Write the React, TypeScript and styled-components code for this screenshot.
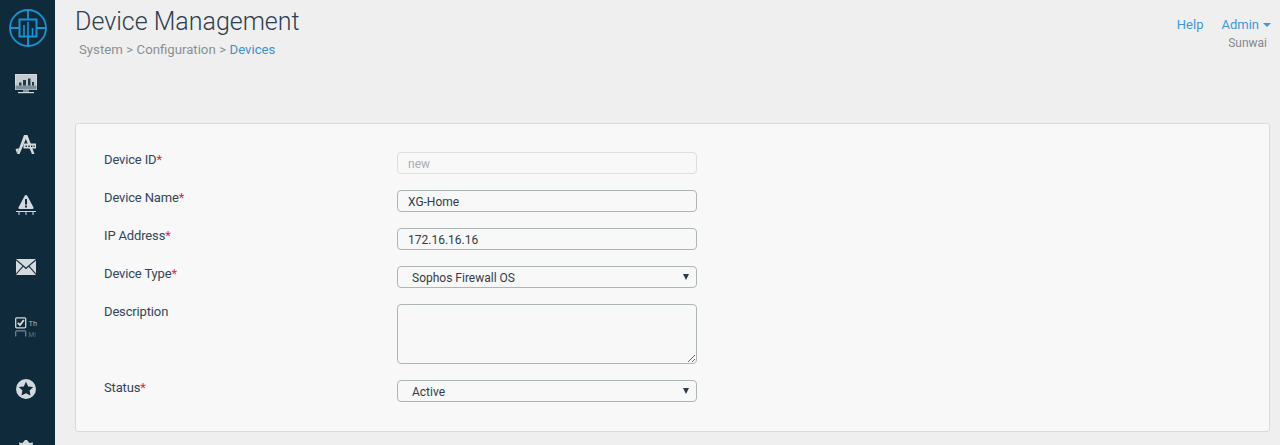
import React from "react";
import styled, { createGlobalStyle } from "styled-components";

const Global = createGlobalStyle`
  html, body {
    margin: 0;
    padding: 0;
    height: 445px;
    overflow: hidden;
    background: #efefef;
    font-family: Roboto, "Liberation Sans", sans-serif;
  }
  * { box-sizing: border-box; }
`;

const Page = styled.div`
  display: flex;
  width: 1280px;
  height: 445px;
  overflow: hidden;
`;

const Sidebar = styled.nav`
  flex: 0 0 55px;
  height: 445px;
  background: #0f2a3b;
  display: flex;
  flex-direction: column;
  align-items: center;
  overflow: hidden;
`;

const LogoSlot = styled.div`
  flex: 0 0 53px;
  padding-top: 2px;
  display: flex;
  align-items: center;
  justify-content: center;
`;

const NavSlot = styled.div`
  flex: 0 0 61px;
  width: 100%;
  padding-right: 3px;
  display: flex;
  align-items: center;
  justify-content: center;
  color: #d3d9dc;
`;

const Main = styled.main`
  flex: 1;
  display: flex;
  flex-direction: column;
  padding: 0 9px 0 20px;
`;

const Header = styled.header`
  height: 123px;
  display: flex;
  justify-content: space-between;
  align-items: flex-start;
`;

const Title = styled.h1`
  margin: 6px 0 0;
  font-size: 25px;
  line-height: 32px;
  font-weight: 300;
  color: #2c3e50;
`;

const Crumbs = styled.div`
  margin: 3px 0 0 4px;
  font-size: 13.2px;
  word-spacing: 0.2px;
  line-height: 18px;
  color: #8a8f94;
`;

const CrumbLink = styled.a`
  color: #3f8fcb;
`;

const UserBox = styled.div`
  padding: 16px 0 0;
  display: flex;
  flex-direction: column;
  align-items: flex-end;
`;

const TopLinks = styled.div`
  display: flex;
  gap: 18px;
  font-size: 13px;
  line-height: 18px;
  color: #3f97d8;
`;

const Caret = styled.span`
  display: inline-block;
  margin-left: 4px;
  vertical-align: 2px;
  border-left: 4px solid transparent;
  border-right: 4px solid transparent;
  border-top: 4px solid #3f97d8;
`;

const UserName = styled.div`
  margin: 2px 4px 0 0;
  font-size: 12px;
  line-height: 14px;
  color: #84898e;
`;

const Card = styled.section`
  width: 1195px;
  height: 309px;
  padding: 28px 28px 0;
  background: #f8f8f8;
  border: 1px solid #dadada;
  border-radius: 3px;
  display: flex;
  flex-direction: column;
  gap: 16px;
`;

const Row = styled.div`
  display: flex;
  align-items: flex-start;
`;

const Label = styled.label`
  flex: 0 0 293px;
  font-size: 13px;
  letter-spacing: -0.15px;
  line-height: 16px;
  color: #34465a;
`;

const Required = styled.span`
  color: #e8243f;
`;

const Field = styled.input<{ $off?: boolean }>`
  width: 300px;
  height: 22px;
  padding: 3px 10px 1px;
  background: #f8f8f8;
  border: 1px solid ${(p) => (p.$off ? "#dcdfdf" : "#aeb5b5")};
  border-radius: 4px;
  outline: none;
  font: 12px Roboto, sans-serif;
  color: ${(p) => (p.$off ? "#a9adb0" : "#2f3d4a")};
`;

const Area = styled.textarea`
  display: block;
  width: 300px;
  height: 60px;
  background: #f8f8f8;
  border: 1px solid #aeb5b5;
  border-radius: 4px;
  outline: none;
  resize: vertical;
`;

const SelectWrap = styled.div`
  position: relative;
  width: 300px;
  height: 22px;

  &::after {
    content: "";
    position: absolute;
    right: 8px;
    top: 8px;
    border-left: 3px solid transparent;
    border-right: 3px solid transparent;
    border-top: 6px solid #2c3a47;
    pointer-events: none;
  }
`;

const Select = styled.select`
  appearance: none;
  width: 100%;
  height: 100%;
  padding: 3px 14px 1px;
  background: #f8f8f8;
  border: 1px solid #aeb5b5;
  border-radius: 4px;
  outline: none;
  font: 12px Roboto, sans-serif;
  color: #2f3d4a;
`;

const LogoIcon = () => (
  <svg width="40" height="40" viewBox="0 0 40 40" fill="none" stroke="#1b93d2" strokeWidth="1.8">
    <circle cx="20" cy="20" r="18" />
    <path d="M20 2v9M20 29v9M2 20h9.500M28.500 20h9.500" />
    <rect x="11.500" y="11.500" width="17" height="17" strokeWidth="2" />
    <path d="M16 28v-11M20 28v-14M24.500 28v-8" strokeWidth="1.600" />
  </svg>
);

const MonitorIcon = () => (
  <svg width="24" height="21" viewBox="0 0 24 21">
    <rect x="1" y="1" width="22" height="16" fill="#d3d9dc" />
    <rect x="2" y="2" width="20" height="10.500" fill="#c3ccd0" />
    <rect x="1.500" y="12.500" width="21" height="4" fill="#7e8e97" />
    <path fill="#1f3a4b" d="M5 9.500h2.500v3H5zM9 7h3v5.500H9zM14 5.500h2.500v7H14zM18 9h2v3.500h-2z" />
    <rect x="9" y="17" width="6" height="2" fill="#7e8e97" />
    <rect x="4" y="19" width="16" height="1.200" fill="#d3d9dc" />
  </svg>
);

const AppIcon = () => (
  <svg width="22" height="22" viewBox="0 0 22 22">
    <path fill="currentColor" d="M9 1h3.500l7 19h-2.600L10.800 5 8 12 4.500 20H2z" />
    <path fill="currentColor" d="M.5 15l3.800-.8L2 19.500zM8.500 9.500H21v5H8.500z" />
    <path fill="#0f2a3b" d="M10.500 11.500h1.400V13h-1.400zM13.300 11.500h1.400V13h-1.400zM16 11.500h1.400V13H16zM18.500 11.500h1.200V13h-1.200z" />
  </svg>
);

const AlertIcon = () => (
  <svg width="20" height="21" viewBox="0 0 20 21">
    <path fill="currentColor" d="M10 0c.7 0 1 .4 1.400 1l6 11.300c.5 1 .1 1.700-1 1.700H3.600c-1.100 0-1.500-.7-1-1.700L8.600 1C9 .4 9.300 0 10 0z" />
    <path fill="#0f2a3b" d="M9 4h2v5.500H9zM9 10.500h2v2H9z" />
    <path stroke="currentColor" strokeWidth="1" fill="none" d="M0 16.500h20M3 16.500V20M10 16.500V20M17 16.500V20" />
  </svg>
);

const MailIcon = () => (
  <svg width="20" height="16" viewBox="0 0 20 16">
    <path fill="currentColor" d="M0 0h20L10 8.500zM0 1.500v13L6.500 7zM20 1.500v13L13.500 7zM7.300 7.800L10 10.200l2.700-2.400L20 16H0z" />
  </svg>
);

const TasksIcon = () => (
  <svg width="22" height="22" viewBox="0 0 22 22" fill="none">
    <rect x=".7" y=".8" width="10" height="10" rx="1" stroke="currentColor" strokeWidth="1.300" />
    <path d="M2.800 5.800l2.200 2.200 3.800-5" stroke="currentColor" strokeWidth="1.900" />
    <text x="13.500" y="8.500" fontSize="7.500" fill="#aab5bb" fontFamily="Roboto, sans-serif">Th</text>
    <path d="M.7 19.500v-4.700a1 1 0 0 1 1-1h8a1 1 0 0 1 1 1v4.700" stroke="#76868f" strokeWidth="1.200" />
    <text x="13.500" y="20" fontSize="6.500" fill="#5f717b" fontFamily="Roboto, sans-serif">Mi</text>
  </svg>
);

const StarIcon = () => (
  <svg width="20" height="20" viewBox="0 0 20 20">
    <path
      fill="currentColor"
      fillRule="evenodd"
      d="M10 0a10 10 0 1 0 0 20 10 10 0 0 0 0-20zM10 2.800l2.200 4.600 5 .7-3.600 3.500.9 5-4.500-2.400-4.500 2.400.9-5-3.600-3.500 5-.7z"
    />
  </svg>
);

const GearIcon = () => (
  <svg width="20" height="20" viewBox="0 0 20 20">
    <path fill="currentColor" d="M1 10l2.500-4L3 2.500 6.500 3 9 0h2l2.500 3 3.500-.5L16.500 6 19 10v10H1z" />
  </svg>
);

const navIcons = [MonitorIcon, AppIcon, AlertIcon, MailIcon, TasksIcon, StarIcon, GearIcon];

const fields = [
  { label: "Device ID", required: true, control: <Field $off disabled defaultValue="new" /> },
  { label: "Device Name", required: true, control: <Field defaultValue="XG-Home" /> },
  { label: "IP Address", required: true, control: <Field defaultValue="172.16.16.16" /> },
  {
    label: "Device Type",
    required: true,
    control: (
      <SelectWrap>
        <Select defaultValue="Sophos Firewall OS">
          <option>Sophos Firewall OS</option>
        </Select>
      </SelectWrap>
    ),
  },
  { label: "Description", required: false, control: <Area /> },
  {
    label: "Status",
    required: true,
    control: (
      <SelectWrap>
        <Select defaultValue="Active">
          <option>Active</option>
        </Select>
      </SelectWrap>
    ),
  },
];

const App: React.FC = () => {
  return (
    <Page>
      <Global />
      <Sidebar>
        <LogoSlot>
          <LogoIcon />
        </LogoSlot>
        {navIcons.map((Icon, i) => (
          <NavSlot key={i}>
            <Icon />
          </NavSlot>
        ))}
      </Sidebar>
      <Main>
        <Header>
          <div>
            <Title>Device Management</Title>
            <Crumbs>
              System &gt; Configuration &gt; <CrumbLink>Devices</CrumbLink>
            </Crumbs>
          </div>
          <UserBox>
            <TopLinks>
              <span>Help</span>
              <span>
                Admin
                <Caret />
              </span>
            </TopLinks>
            <UserName>Sunwai</UserName>
          </UserBox>
        </Header>
        <Card>
          {fields.map((f) => (
            <Row key={f.label}>
              <Label>
                {f.label}
                {f.required && <Required>*</Required>}
              </Label>
              {f.control}
            </Row>
          ))}
        </Card>
      </Main>
    </Page>
  );
};

export default App;
